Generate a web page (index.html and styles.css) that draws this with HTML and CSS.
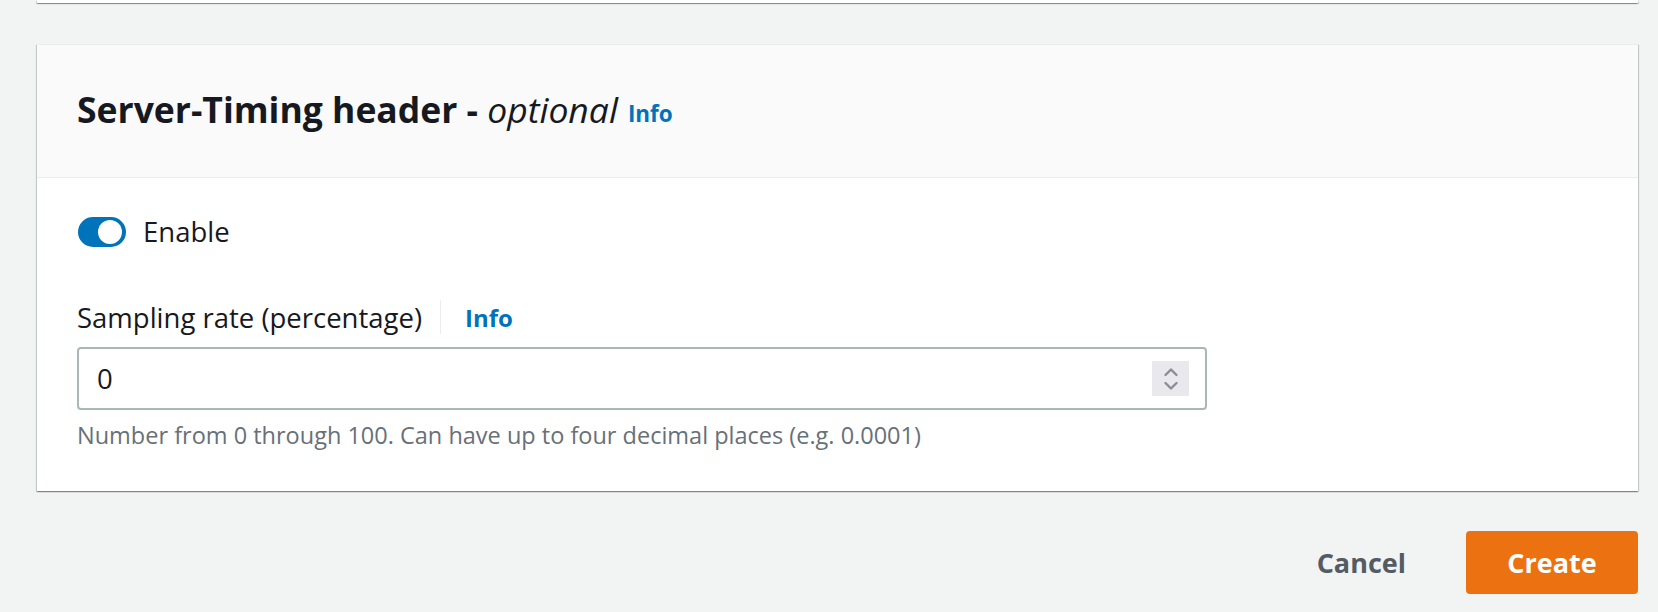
FILE: index.html
```html
<!DOCTYPE html>
<html lang="en">
<head>
<meta charset="utf-8">
<title>Server-Timing header</title>
<link rel="stylesheet" href="styles.css">
</head>
<body>
<div class="page">
  <div class="card card-prev"></div>
  <section class="card">
    <div class="card-header">
      <h2 class="card-title">Server-Timing header - <i>optional</i></h2>
      <a class="info info-title">Info</a>
    </div>
    <div class="card-body">
      <div class="toggle-row">
        <span class="toggle"><span class="knob"></span></span>
        <span class="toggle-label">Enable</span>
      </div>
      <div class="field">
        <div class="field-label">
          <span>Sampling rate (percentage)</span>
          <span class="sep"></span>
          <a class="info">Info</a>
        </div>
        <div class="input">
          <span class="value">0</span>
          <span class="spinner">
            <svg width="16" height="30" viewBox="0 0 16 30" aria-hidden="true">
              <path d="M2.5 11 L8 5.5 L13.5 11" fill="none" stroke="#8c8c99" stroke-width="2.4" stroke-linecap="round" stroke-linejoin="round"/>
              <path d="M2.5 19 L8 24.5 L13.5 19" fill="none" stroke="#8c8c99" stroke-width="2.4" stroke-linecap="round" stroke-linejoin="round"/>
            </svg>
          </span>
        </div>
        <div class="desc">Number from 0 through 100. Can have up to four decimal places (e.g. 0.0001)</div>
      </div>
    </div>
  </section>
  <div class="actions">
    <button class="btn btn-link">Cancel</button>
    <button class="btn btn-primary">Create</button>
  </div>
</div>
</body>
</html>
```

FILE: styles.css
```css
* { box-sizing: border-box; }
html, body {
  margin: 0;
  padding: 0;
  background: #f2f3f3;
}
body {
  font-family: "Open Sans", "Noto Sans", sans-serif;
  color: #16191f;
}
.page {
  padding: 0 20px 0 37px;
  display: flex;
  flex-direction: column;
}
.card {
  background: #fff;
  border-top: 1px solid #eaeded;
  box-shadow: 0 1px 1px 0 rgba(0, 28, 36, 0.3), 1px 1px 1px 0 rgba(0, 28, 36, 0.15), -1px 1px 1px 0 rgba(0, 28, 36, 0.15);
}
.card-prev {
  height: 3px;
  border-top: none;
  margin-bottom: 41px;
}
.card-header {
  height: 133px;
  background: #fafafa;
  border-bottom: 1px solid #eaeded;
  padding: 0 40px 4px 40px;
  display: flex;
  align-items: center;
  gap: 10px;
}
.card-title {
  margin: 0;
  font-size: 35.5px;
  font-weight: 700;
  line-height: 44px;
}
.card-title i {
  font-weight: 400;
}
.info {
  color: #0073bb;
  font-weight: 700;
  font-size: 24px;
  text-decoration: none;
}
.info-title {
  font-size: 22.5px;
  margin-top: 8px;
}
.card-body {
  padding: 39px 40px 40px 40px;
}
.toggle-row {
  display: flex;
  align-items: center;
  height: 30px;
  gap: 17px;
}
.toggle {
  width: 48px;
  height: 30px;
  border-radius: 15px;
  background: #0073bb;
  position: relative;
  flex: none;
  margin-left: 1px;
}
.knob {
  position: absolute;
  right: 4px;
  top: 3px;
  width: 24px;
  height: 24px;
  border-radius: 50%;
  background: #fff;
}
.toggle-label {
  font-size: 27.5px;
  line-height: 36px;
}
.field {
  margin-top: 52px;
}
.field-label {
  display: flex;
  align-items: center;
  height: 36px;
  font-size: 27.5px;
}
.sep {
  width: 1px;
  height: 34px;
  background: #eaeded;
  margin: 0 24px 0 18px;
}
.input {
  margin-top: 12px;
  width: 1130px;
  height: 63px;
  border: 2px solid #aab7b8;
  border-radius: 4px;
  display: flex;
  align-items: center;
  justify-content: space-between;
  padding: 0 16px 0 18px;
}
.value {
  font-size: 27.5px;
}
.spinner {
  width: 37px;
  height: 35px;
  background: #e9e9ed;
  display: flex;
  align-items: center;
  justify-content: center;
}
.desc {
  margin-top: 9px;
  font-size: 23.5px;
  line-height: 32px;
  color: #687078;
}
.actions {
  margin-top: 40px;
  display: flex;
  justify-content: flex-end;
  align-items: center;
}
.btn {
  font-family: inherit;
  font-weight: 700;
  font-size: 27px;
  border: none;
  cursor: pointer;
}
.btn-link {
  background: transparent;
  color: #545b64;
  padding: 0;
  margin-right: 60px;
}
.btn-primary {
  background: #ec7211;
  color: #fff;
  width: 172px;
  height: 63px;
  border-radius: 4px;
}
```
